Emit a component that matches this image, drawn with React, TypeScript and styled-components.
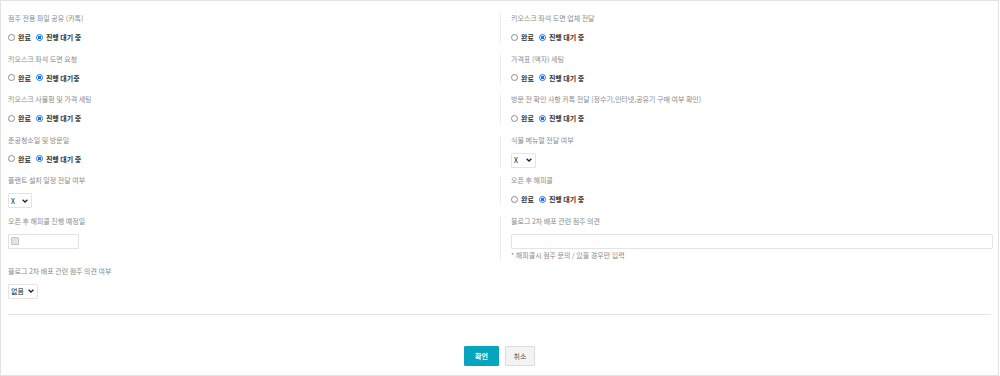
import React from 'react';
import styled, { createGlobalStyle } from 'styled-components';

const GlobalStyle = createGlobalStyle`
  html, body {
    margin: 0;
    padding: 0;
    background: #fff;
  }
  body {
    font-family: "Noto Sans CJK KR", "Noto Sans", sans-serif;
  }
  * {
    box-sizing: border-box;
  }
`;

type Field =
  | { kind: 'radio'; label: string; pending: string }
  | { kind: 'select'; label: string; value: string; width: number }
  | { kind: 'date'; label: string }
  | { kind: 'text'; label: string; note: string };

const leftFields: Field[] = [
  { kind: 'radio', label: '점주 전용 파일 공유 (카톡)', pending: '진행 대기 중' },
  { kind: 'radio', label: '키오스크 좌석 도면 요청', pending: '진행 대기중' },
  { kind: 'radio', label: '키오스크 사물함 및 가격 세팅', pending: '진행 대기 중' },
  { kind: 'radio', label: '준공청소일 및 방문일', pending: '진행 대기 중' },
  { kind: 'select', label: '플랜트 설치 일정 전달 여부', value: 'X', width: 24 },
  { kind: 'date', label: '오픈 후 해피콜 진행 예정일' },
  { kind: 'select', label: '블로그 2차 배포 관련 점주 의견 여부', value: '없음', width: 30 },
];

const rightFields: Field[] = [
  { kind: 'radio', label: '키오스크 좌석 도면 업체 전달', pending: '진행 대기 중' },
  { kind: 'radio', label: '가격표 (액자) 세팅', pending: '진행 대기 중' },
  {
    kind: 'radio',
    label: '방문 전 확인 사항 카톡 전달 (정수기,인터넷,공유기 구매 여부 확인)',
    pending: '진행 대기 중',
  },
  { kind: 'select', label: '식물 메뉴얼 전달 여부', value: 'X', width: 25 },
  { kind: 'radio', label: '오픈 후 해피콜', pending: '진행 대기 중' },
  { kind: 'text', label: '블로그 2차 배포 관련 점주 의견', note: '* 해피콜시 점주 문의 / 있을 경우만 입력' },
];

function Chevron() {
  return (
    <svg width="6" height="4" viewBox="0 0 6 4">
      <path d="M0.6 0.7 L3 3 L5.4 0.7" fill="none" stroke="#222" strokeWidth="1.3" />
    </svg>
  );
}

function Control({ field }: { field: Field }) {
  if (field.kind === 'radio') {
    return (
      <Styled.RadioRow>
        <Styled.RadioOption>
          <Styled.Radio />
          완료
        </Styled.RadioOption>
        <Styled.RadioOption>
          <Styled.Radio checked />
          {field.pending}
        </Styled.RadioOption>
      </Styled.RadioRow>
    );
  }
  if (field.kind === 'select') {
    return (
      <Styled.SelectBox width={field.width}>
        <span>{field.value}</span>
        <Chevron />
      </Styled.SelectBox>
    );
  }
  if (field.kind === 'date') {
    return (
      <Styled.DateInput>
        <Styled.CalendarMark />
      </Styled.DateInput>
    );
  }
  return (
    <>
      <Styled.TextInput />
      <Styled.Note>{field.note}</Styled.Note>
    </>
  );
}

export default function App() {
  const rows = leftFields.map((left, i) => [left, rightFields[i]] as const);
  return (
    <>
      <GlobalStyle />
      <Styled.Page>
        <Styled.Grid>
          {rows.map(([left, right], i) => (
            <React.Fragment key={i}>
              <Styled.Item>
                <Styled.Label>{left.label}</Styled.Label>
                <Control field={left} />
              </Styled.Item>
              {right ? (
                <Styled.Item bordered>
                  <Styled.Label>{right.label}</Styled.Label>
                  <Control field={right} />
                </Styled.Item>
              ) : (
                <div />
              )}
            </React.Fragment>
          ))}
        </Styled.Grid>
        <Styled.Divider />
        <Styled.Buttons>
          <Styled.Button primary>확인</Styled.Button>
          <Styled.Button>취소</Styled.Button>
        </Styled.Buttons>
      </Styled.Page>
    </>
  );
}

const Styled = {
  Page: styled.div`
    width: 999px;
    height: 376px;
    border: 1px solid #e2e2e2;
    padding: 12px 7px 0 7px;
    display: flex;
    flex-direction: column;
  `,
  Grid: styled.div`
    display: grid;
    grid-template-columns: 492px 1fr;
    grid-template-rows: repeat(5, 30.5px) 40px auto;
    row-gap: 10px;
  `,
  Item: styled.div<{ bordered?: boolean }>`
    align-self: start;
    display: flex;
    flex-direction: column;
    align-items: flex-start;
    min-height: 30px;
    ${({ bordered }) => (bordered ? 'border-left: 1px solid #ececec; padding-left: 10px;' : '')}
  `,
  Label: styled.div`
    height: 11px;
    line-height: 11px;
    margin-bottom: 7px;
    font-size: 7px;
    color: #8a8a8a;
    white-space: nowrap;
  `,
  RadioRow: styled.div`
    display: flex;
    align-items: center;
    gap: 5px;
    height: 12px;
  `,
  RadioOption: styled.label`
    display: flex;
    align-items: center;
    gap: 3px;
    font-size: 7px;
    font-weight: 700;
    color: #333;
    white-space: nowrap;
  `,
  Radio: styled.span<{ checked?: boolean }>`
    display: inline-block;
    width: 7px;
    height: 7px;
    border-radius: 50%;
    border: 1px solid ${({ checked }) => (checked ? '#1a73e8' : '#8c8c8c')};
    background: ${({ checked }) =>
      checked ? 'radial-gradient(circle, #1a73e8 0 1.6px, #fff 1.9px 100%)' : '#fff'};
  `,
  SelectBox: styled.div<{ width: number }>`
    display: flex;
    align-items: center;
    justify-content: space-between;
    width: ${({ width }) => width}px;
    height: 15px;
    padding: 0 3px 0 2px;
    border: 1px solid #e4e4e4;
    border-radius: 1px;
    font-size: 7px;
    color: #222;
    background: #fff;
  `,
  DateInput: styled.div`
    display: flex;
    align-items: center;
    width: 71px;
    height: 15px;
    padding-left: 2px;
    border: 1px solid #e2e2e2;
    background: #fff;
  `,
  CalendarMark: styled.span`
    width: 8px;
    height: 8px;
    border: 1px solid #c4c4c4;
    border-radius: 1px;
    background: #e4e4e4;
  `,
  TextInput: styled.div`
    width: 482px;
    height: 15px;
    border: 1px solid #e4e4e4;
    border-radius: 2px;
    box-shadow: 0 0 1px rgba(0, 0, 0, 0.06);
    background: #fff;
  `,
  Note: styled.div`
    margin-top: 1px;
    line-height: 10px;
    font-size: 7px;
    color: #8a8a8a;
    white-space: nowrap;
  `,
  Divider: styled.div`
    margin-top: 15px;
    height: 1px;
    background: #e4e4e4;
  `,
  Buttons: styled.div`
    display: flex;
    justify-content: center;
    gap: 6px;
    margin-top: 31px;
  `,
  Button: styled.button<{ primary?: boolean }>`
    width: ${({ primary }) => (primary ? 35 : 30)}px;
    height: 20px;
    padding: 0;
    font-family: "Noto Sans CJK KR", "Noto Sans", sans-serif;
    font-size: 7px;
    font-weight: ${({ primary }) => (primary ? 700 : 400)};
    color: ${({ primary }) => (primary ? '#fff' : '#555')};
    background: ${({ primary }) => (primary ? '#07a5bd' : '#f3f3f3')};
    border: 1px solid ${({ primary }) => (primary ? '#07a5bd' : '#dcdcdc')};
    border-radius: 1px;
    cursor: pointer;
  `,
};
